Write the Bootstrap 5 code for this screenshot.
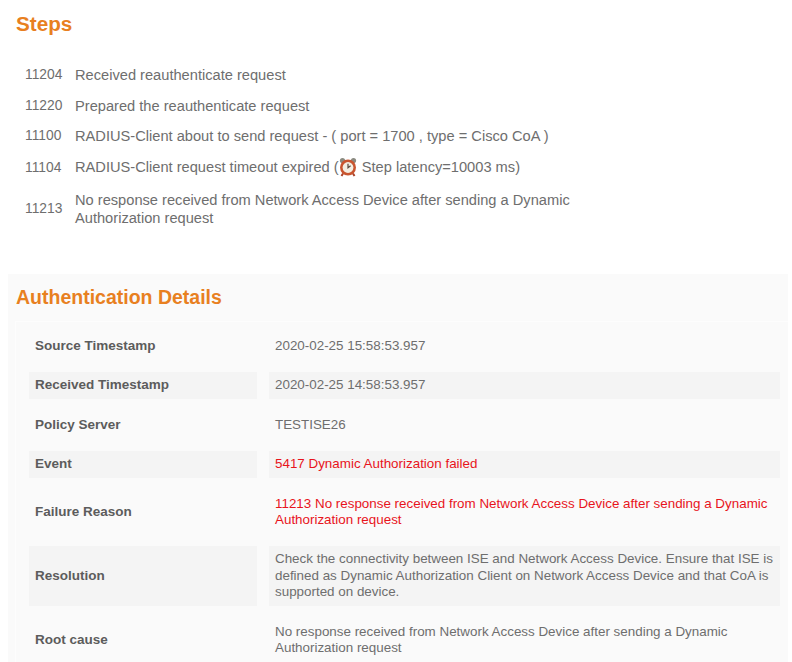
<!DOCTYPE html>
<html lang="en"><head><meta charset="utf-8">
<title>Steps</title>
<link rel="stylesheet" href="https://cdn.jsdelivr.net/npm/bootstrap@5.3.0/dist/css/bootstrap.min.css">
<style>
html,body{height:662px;overflow:hidden;background:#fff}
body{font-family:"Liberation Sans",Arial,sans-serif;font-size:13.4px;line-height:16.5px;color:#6e6e6e}
.sect-title{font-weight:700;color:#e8801f;margin:0}
.steps-head{font-size:20.7px;line-height:24px;padding:12px 0 0 16px}
.auth-title{font-size:19.5px;line-height:24px}
.steps-list{margin:24px 0 0 25px;display:grid;grid-template-columns:50px 510px;align-items:center}
.step-row{display:contents}
.step-code{font-size:13.8px}
.step-cell{padding:6px 0 6.5px;font-size:14.65px;line-height:18px}
.step-cell-clock{padding:5px 0 8.5px}
.clock{vertical-align:-5px;margin:0 0 0 -1px}
.auth-panel{margin:0 4px 0 8px;background:#fafafa;padding:11px 0 0 8px;height:400px}
.steps-block{height:274px}
.auth-inner{margin:12px 0 0 -1px;border:1px solid #fdfdfd;border-right:0;border-bottom:0;padding:11px 7px 0 13px;display:grid;grid-template-columns:228px 511px;column-gap:12px;row-gap:12.9px}
.lab,.val{background:#f4f4f4;padding:5px 6px;display:flex;align-items:center;min-height:26.4px}
.lab{font-weight:700;color:#5c5c5c;font-size:13.5px}
.plain{background:transparent}
.err{color:#e8141c}
</style></head><body>
<div class="steps-block">
<h2 class="sect-title steps-head">Steps</h2>
<div class="steps-list">
<div class="step-row"><div class="step-code">11204</div><div class="step-cell">Received reauthenticate request</div></div>
<div class="step-row"><div class="step-code">11220</div><div class="step-cell">Prepared the reauthenticate request</div></div>
<div class="step-row"><div class="step-code">11100</div><div class="step-cell">RADIUS-Client about to send request - ( port = 1700 , type = Cisco CoA )</div></div>
<div class="step-row"><div class="step-code">11104</div><div class="step-cell step-cell-clock">RADIUS-Client request timeout expired (<svg class="clock" width="20" height="20" viewBox="0 0 20 20"><circle cx="4.5" cy="3.5" r="2.6" fill="#8a8a80"/><circle cx="15.5" cy="3.5" r="2.6" fill="#8a8a80"/><path d="M5 16.5 3.5 19M15 16.5l1.5 2.5" stroke="#a8432a" stroke-width="2"/><circle cx="10" cy="10.5" r="8" fill="#c9552f"/><circle cx="10" cy="10.5" r="5.4" fill="#f3eee2"/><path d="M10 6.8v3.9l2.6-2" stroke="#5a4a40" stroke-width="1.2" fill="none"/></svg> Step latency=10003 ms)</div></div>
<div class="step-row"><div class="step-code">11213</div><div class="step-cell">No response received from Network Access Device after sending a Dynamic Authorization request</div></div>
</div>
</div>
<div class="auth-panel">
<h2 class="sect-title auth-title">Authentication Details</h2>
<div class="auth-inner">
<div class="lab plain">Source Timestamp</div><div class="val plain">2020-02-25 15:58:53.957</div>
<div class="lab">Received Timestamp</div><div class="val">2020-02-25 14:58:53.957</div>
<div class="lab plain">Policy Server</div><div class="val plain">TESTISE26</div>
<div class="lab">Event</div><div class="val err">5417 Dynamic Authorization failed</div>
<div class="lab plain">Failure Reason</div><div class="val plain err">11213 No response received from Network Access Device after sending a Dynamic Authorization request</div>
<div class="lab">Resolution</div><div class="val">Check the connectivity between ISE and Network Access Device. Ensure that ISE is defined as Dynamic Authorization Client on Network Access Device and that CoA is supported on device.</div>
<div class="lab plain">Root cause</div><div class="val plain">No response received from Network Access Device after sending a Dynamic Authorization request</div>
</div></div>
<script src="https://cdn.jsdelivr.net/npm/bootstrap@5.3.0/dist/js/bootstrap.bundle.min.js"></script>
</body></html>
